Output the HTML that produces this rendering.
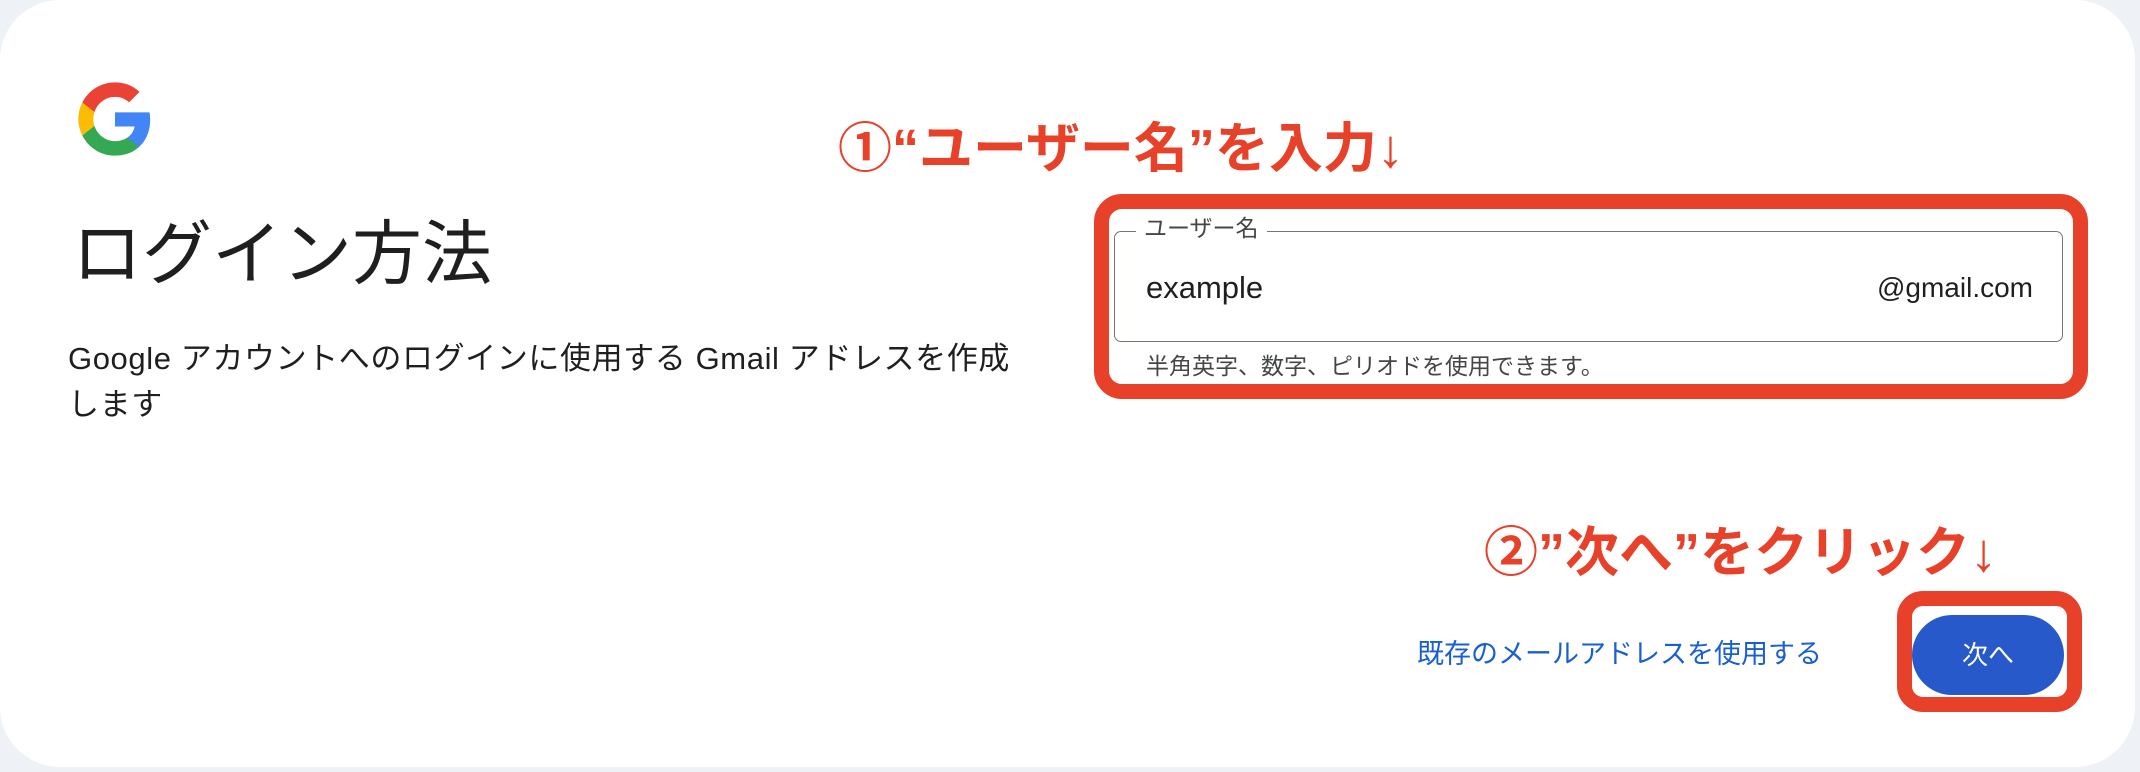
<!DOCTYPE html>
<html><head><meta charset="utf-8"><style>
html,body{margin:0;padding:0;}
body{width:2140px;height:772px;background:#eef1f6;position:relative;overflow:hidden;font-family:"Liberation Sans","Noto Sans CJK JP",sans-serif;}
.card{position:absolute;left:0;top:0;width:2135px;height:767px;background:#fff;border-radius:60px;}
.abs{position:absolute;white-space:nowrap;}
.red{color:#e8412a;font-weight:bold;font-size:54px;line-height:1;}
.rbox{position:absolute;border:15px solid #e8412a;box-sizing:border-box;}
</style></head><body>
<div class="card"></div>
<svg class="abs" style="left:75px;top:79px" width="80" height="80" viewBox="0 0 48 48">
<path fill="#4285F4" d="M45.1 24.5c0-1.6-.1-3.1-.4-4.5H24v8.5h11.8c-.5 2.8-2.1 5.1-4.4 6.7v5.5h7.1c4.2-3.8 6.6-9.5 6.6-16.2z"/>
<path fill="#34A853" d="M24 46c5.9 0 10.9-2 14.5-5.3l-7.1-5.5c-2 1.3-4.5 2.1-7.4 2.1-5.7 0-10.6-3.9-12.3-9.1H4.4v5.7C8 41.1 15.4 46 24 46z"/>
<path fill="#FBBC05" d="M11.7 28.2c-.4-1.3-.7-2.7-.7-4.2s.3-2.9.7-4.2v-5.7H4.4C2.9 17.1 2 20.4 2 24s.9 6.9 2.4 9.9l7.3-5.7z"/>
<path fill="#EA4335" d="M24 10.7c3.2 0 6.1 1.1 8.4 3.3l6.3-6.3C34.9 4.1 29.9 2 24 2 15.4 2 8 6.9 4.4 14.1l7.3 5.7c1.7-5.2 6.6-9.1 12.3-9.1z"/>
</svg>
<div class="abs" style="left:72px;top:216px;font-size:70px;color:#1f1f1f;line-height:1.1">ログイン方法</div>
<div class="abs" style="left:68px;top:336px;font-size:31px;letter-spacing:0.6px;color:#1f1f1f;line-height:46px;white-space:normal;width:1010px">Google アカウントへのログインに使用する Gmail アドレスを作成<br>します</div>

<div class="abs red" style="left:838px;top:122px">①“ユーザー名”を入力↓</div>
<div class="rbox" style="left:1094px;top:194px;width:994px;height:205px;border-radius:28px"></div>
<div class="abs" style="left:1114px;top:231px;width:949px;height:111px;border:1.5px solid #747775;border-radius:7px;box-sizing:border-box"></div>
<div class="abs" style="left:1136px;top:214px;padding:0 8px;background:#fff;font-size:23px;color:#444746;line-height:28px">ユーザー名</div>
<div class="abs" style="left:1146px;top:268px;font-size:31px;color:#1f1f1f;line-height:40px">example</div>
<div class="abs" style="right:107px;top:268px;font-size:28px;color:#1f1f1f;line-height:40px">@gmail.com</div>
<div class="abs" style="left:1146px;top:352px;font-size:23px;color:#444746;line-height:28px">半角英字、数字、ピリオドを使用できます。</div>

<div class="abs red" style="left:1484px;top:526px">②”次へ”をクリック↓</div>
<div class="abs" style="left:1417px;top:636px;font-size:27px;color:#1a5fd0;line-height:36px">既存のメールアドレスを使用する</div>
<div class="rbox" style="left:1897px;top:591px;width:185px;height:121px;border-radius:26px"></div>
<div class="abs" style="left:1912px;top:615px;width:152px;height:80px;border-radius:40px;background:#2759cb;color:#fff;font-size:26px;line-height:80px;text-align:center">次へ</div>
</body></html>
